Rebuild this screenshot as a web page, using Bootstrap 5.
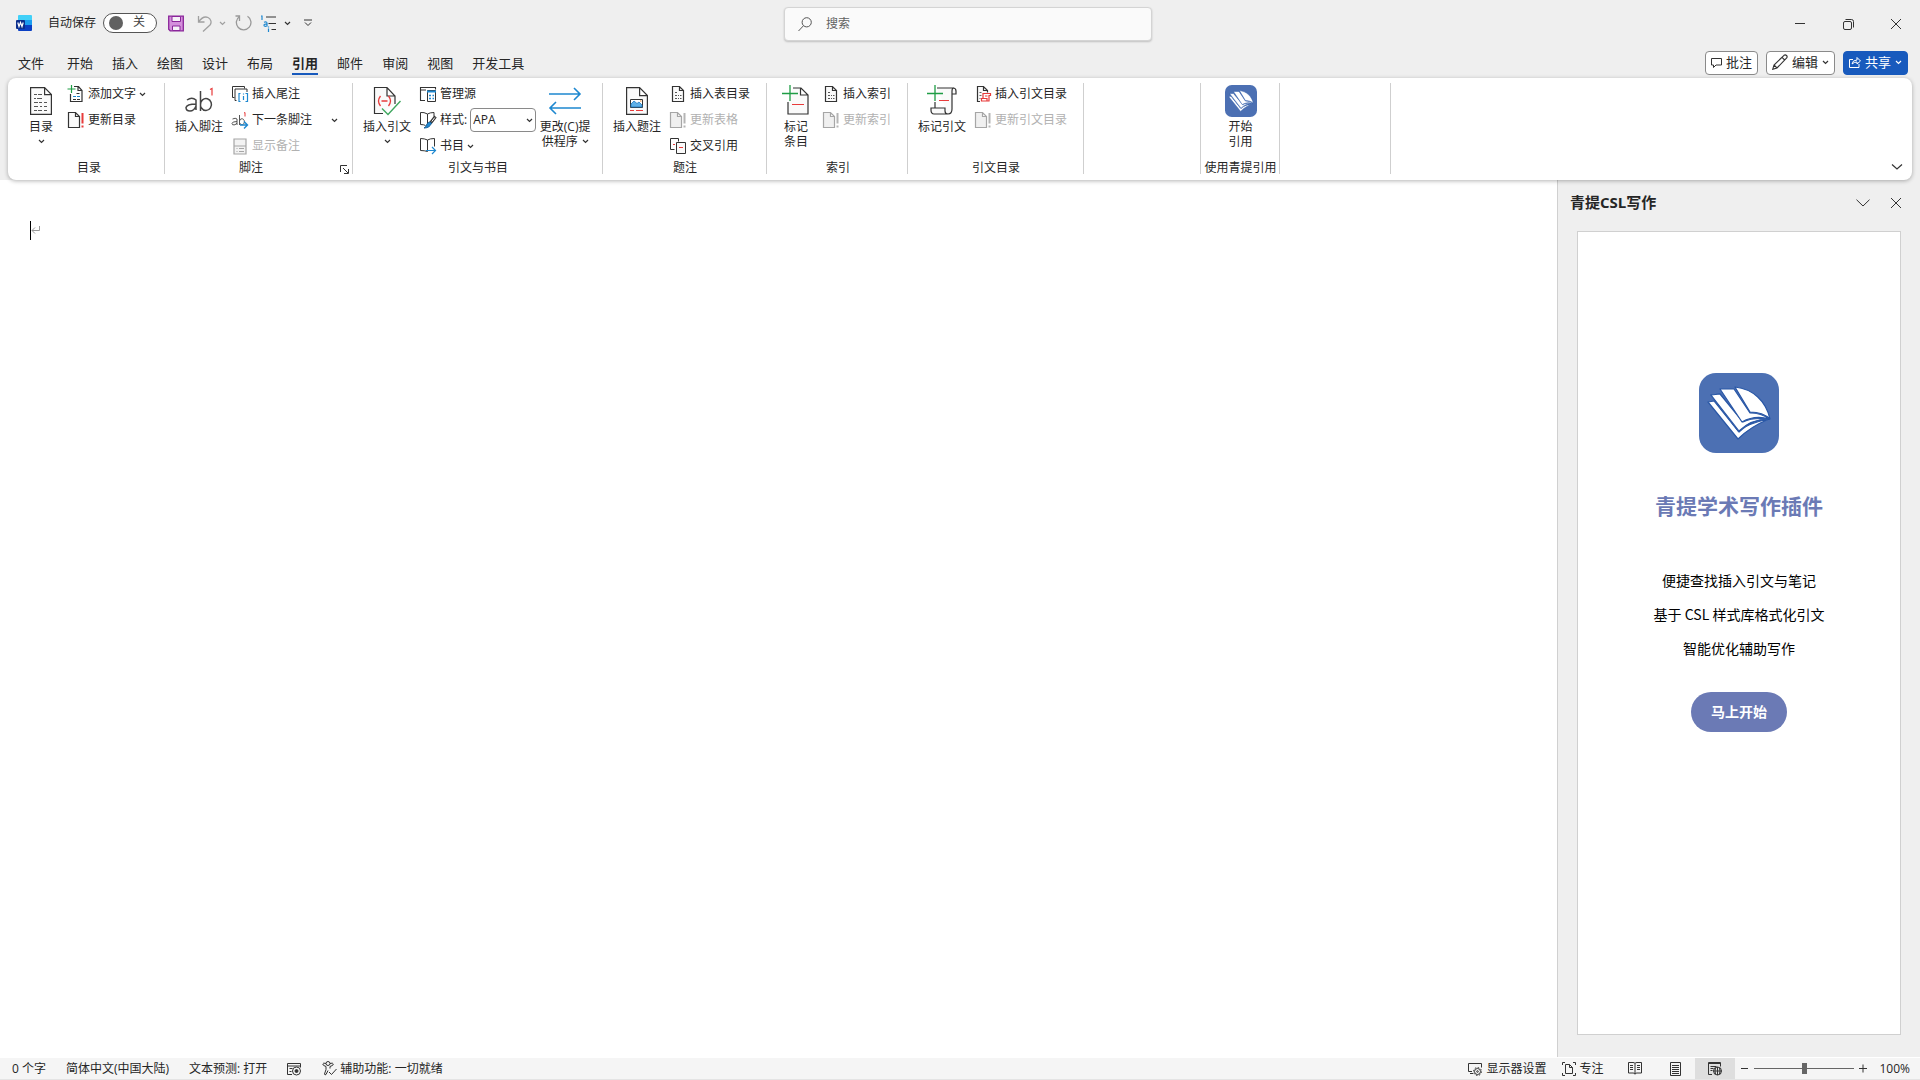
<!DOCTYPE html>
<html lang="zh-CN">
<head>
<meta charset="utf-8">
<meta name="viewport" content="width=device-width, initial-scale=1">
<title>Word - 引用</title>
<link href="https://cdn.jsdelivr.net/npm/bootstrap@5.3.0/dist/css/bootstrap.min.css" rel="stylesheet">
<style>
body{font-family:"Open Sans","Noto Sans CJK SC",sans-serif;font-size:12px;line-height:16px;color:#262626;background:#fff;height:100vh;overflow:hidden}
button,input,select{font-family:inherit;font-size:inherit;line-height:inherit;color:inherit}
button{border:0;background:none;padding:0;white-space:nowrap}
svg{display:block;flex:none;fill:none;stroke:#333}
a{color:inherit;text-decoration:none}
.topzone{background:#efefef}
.titlebar{height:48px;padding-left:16px}
.side{flex:1 1 0}
.quick{padding-bottom:2px}
.quick .spaced{margin-left:13px}
.toggle{position:relative;width:54px;height:20px;margin-left:7px;margin-right:11px}
.toggle input{appearance:none;display:block;width:54px;height:20px;margin:0;border:1px solid #555;border-radius:10px;background:#fff}
.toggle input::before{content:"";display:block;width:14px;height:14px;margin:2px 5px;border-radius:50%;background:#616161}
.toggle span{position:absolute;left:30px;top:1px;color:#444}
.searchbox{width:368px;height:34px;background:#fafafa;border:1px solid #d4d4d4;border-radius:4px;box-shadow:0 1px 2px #0003;padding:0 13px;gap:14px}
.searchbox input{border:0;background:none;outline:0;min-width:0;padding:0}
.searchbox input::placeholder{color:#616161;opacity:1}
.winbtn{width:48px;height:48px}
.tabrow{height:30px;padding-left:18px;padding-right:12px}
.tabs{gap:19px;font-size:13px}
.tabs a{display:block;height:26px;line-height:28px;margin-top:1px;border-bottom:2px solid transparent}
.tabs a.current{font-weight:700;border-color:#185abd}
.tabs .file{margin-right:4px}
.pill{height:24px;border:1px solid #8a8a8a;border-radius:4px;background:#fff;font-size:13px;padding:0 5px 2px;gap:4px}
.pill.share{background:#185abd;border-color:#185abd;color:#fff}
.pill.share svg{stroke:#fff}
.ribbon{position:relative;height:102px;margin:0 8px;background:#fff;border-radius:8px;box-shadow:0 1px 4px #0000004d;z-index:2}
.group{position:relative;padding:3px 0 4px 10px;display:flex;flex-direction:column}
.group::after{content:"";position:absolute;right:0;top:5px;bottom:6px;width:1px;background:#cfcfcf}
.tools{height:79px}
.caption{text-align:center;margin-left:-10px}
.g-toc{width:157px;padding-left:15px}
.g-foot{width:188px}
.g-foot .caption{padding-right:16px}
.g-cite{width:250px}
.g-cap{width:164px}
.g-index{width:141px;padding-left:11px}
.g-auth{width:176px}
.g-blank{width:117px}
.g-qt{width:79px;padding-left:0}
.g-qt .caption{margin-left:0}
.g-last{width:111px}
.big{width:48px;height:78px;display:flex;flex-direction:column;align-items:center;line-height:15px;padding-top:4px}
.big .ic{height:32px;margin-bottom:2px;display:flex;align-items:center}
.big.narrow{width:36px}
.big.wide{width:52px;margin-left:3px}
.big .chev{margin-top:5px}
.smalls{margin-left:8px}
.cmd{height:26px;display:flex;align-items:center;gap:3px;white-space:nowrap}
.cmd .ic{width:18px;display:flex;justify-content:center;flex:none}
.cmd:disabled{color:#b1b1b1}
.cmd:disabled svg{stroke:#a6a6a6}
.pick{position:relative;width:66px;height:24px}
.pick select{appearance:none;width:66px;height:24px;border:1px solid #8a8a8a;border-radius:4px;background:#fff;padding:0 2px}
.pick svg{position:absolute;right:3px;top:10px;pointer-events:none}
.launcher{position:absolute;right:4px;bottom:6px}
.collapse-btn{position:absolute;right:9px;bottom:7px}
.page{padding:41px 30px}
.caret{width:1px;height:19px;background:#000}
.pane{width:363px;background:#efefef;border-left:1px solid #d0d0d0;padding:0 19px 23px}
.pane-head{height:51px;padding-top:3px;margin-left:-7px;margin-right:-19px}
.pane-head h2{font-size:15px;line-height:20px;font-weight:700;margin:0 0 11px}
.pane-head button{width:33px;height:33px;display:flex;align-items:center;justify-content:center}
.frame{border:1px solid #d0d0d0;background:#fff;color:#000;padding-top:141px;font-family:"Noto Sans CJK SC",sans-serif}
.frame h1{font-size:21px;line-height:30px;font-weight:700;color:#6b7ab5;margin:37px 0 43px}
.frame p{font-size:14px;line-height:34px;margin:0}
.start{width:96px;height:40px;border-radius:20px;background:#6b7ab5;color:#fff;font-size:14px;font-weight:700;margin-top:27px;padding-bottom:2px}
.statusbar{height:22px;background:#f5f5f5;border-bottom:1px solid #e4e4e4;padding-left:12px;box-shadow:0 -1px #fff}
.statusbar button{height:21px;display:flex;align-items:center;gap:3px}
.facts{gap:20px}
.focus-mode{margin:0 12px 0 16px}
.statusbar .view{width:40px;justify-content:center}
.view.on{background:#dedede}
.zoom-out{padding-left:6px}
.zoom-level{padding:0 10px 0 11px}
.zoomer{appearance:none;width:100px;height:11px;margin:0 5px;background:linear-gradient(#666,#666) center/100% 1px no-repeat}
.zoomer::-webkit-slider-thumb{appearance:none;width:5px;height:11px;background:#666;border:0}
</style>
<script src="https://cdn.jsdelivr.net/npm/bootstrap@5.3.0/dist/js/bootstrap.bundle.min.js"></script>
</head>
<body class="d-flex flex-column">
<svg width="0" height="0" class="position-absolute" aria-hidden="true">
  <symbol id="chev" viewBox="0 0 7 5"><path d="M1 1l2.500 2.500L6 1" stroke-width="1.200"/></symbol>
  <symbol id="close" viewBox="0 0 12 12"><path d="M1 1l10 10M11 1L1 11"/></symbol>
  <symbol id="docbang" viewBox="0 0 18 18"><path d="M1.500 1.500h7l4 4v11h-11zM8.500 1.500v4h4" fill="var(--f,#fafafa)" stroke-width="1.200"/><path d="M15.500 2v10.500M15.500 14.500v2" stroke="var(--b,#e83b3b)" stroke-width="2"/></symbol>
  <symbol id="doclist" viewBox="0 0 18 18"><path d="M3.500 1.500h7l4 4v11h-11zM10.500 1.500v4h4" fill="#fafafa" stroke-width="1.200"/><path d="M6 7.500h2M6 10.500h2M9 10.500h1M11 10.500h1.500M6 13.500h2M9 13.500h1M11 13.500h1.500" stroke="#555"/></symbol>
  <symbol id="books" viewBox="0 0 80 80"><rect width="80" height="80" rx="17" fill="#4c70b3" stroke="none"/>
    <g fill="#fff" stroke="#2957a6" stroke-width="1.200" stroke-linejoin="round"><path d="M9 29l6-1 24 30c8-6 17-9 31-12C58 51 49 56 39 66z"/><path d="M12 22l9-1 20 35c7-6 18-9 29-10-12 1-20 4-30 13z"/><path d="M12 22l9-1 23 28c8-4 17-4 26-3-12 0-21 3-30 12z"/><path d="M21 16h14l16 24c8 0 14 2 19 6-10-3-18-2-27 3z"/><path d="M36 14c18 2 31 14 35 32-5-5-12-7-20-7z"/></g></symbol>
</svg>

<header class="topzone">
  <div class="titlebar d-flex align-items-center">
    <div class="side quick d-flex align-items-center">
      <svg width="16" height="16" viewBox="0 0 16 16"><g stroke="none"><rect x="2" width="14" height="6" rx="1" fill="#41d0f8"/><rect x="2" y="5" width="14" height="6" fill="#1b9df0"/><path d="M2 10h14v5q0 1-1 1H3q-1 0-1-1z" fill="#0a3fc4"/><rect y="5" width="9" height="9" rx="1" fill="#0b2e8c"/></g><path d="M1.800 7.500l1.200 4 1.500-4 1.500 4 1.200-4" stroke="#fff" stroke-width="1.200"/></svg>
      <label for="autosave" class="ms-3">自动保存</label>
      <div class="toggle"><input type="checkbox" id="autosave" role="switch"><span>关</span></div>
      <button aria-label="保存"><svg width="16" height="17" viewBox="0 0 16 17"><path d="M.700 1.200h12.600l2 0v14.600H2.200L.700 14.300z" fill="#d48fdc" stroke="#8a259a" stroke-width="1.300"/><path d="M4 1.500h8.500v5H4zM4.500 11h7.500v4.500H4.500z" fill="#f6f0f8" stroke="#8a259a"/></svg></button>
      <button aria-label="撤消" class="spaced d-flex align-items-center gap-1"><svg width="16" height="17" viewBox="0 0 16 17"><path d="M1.500 1v6h6M1.500 7C5 2 8 1.200 11 2.500c3 1.300 4 5 2 7.500L6 16.500" stroke="#a0a0a0" stroke-width="1.300"/></svg><svg width="9" height="5" viewBox="0 0 9 5"><path d="M3 1l2.500 2.500L8 1" stroke="#a0a0a0" stroke-width="1.200"/></svg></button>
      <button aria-label="重做" class="ms-2"><svg width="18" height="17" viewBox="0 0 18 17"><path d="M1.500 1h4v5M5.500 1.500a7.300 7.300 0 1 0 8-.2" stroke="#999" stroke-width="1.300"/></svg></button>
      <button aria-label="多级列表" class="d-flex align-items-center gap-2 ms-2"><svg width="16" height="17" viewBox="0 0 16 17"><path d="M6 2h10M8.500 8.500H16M11.500 14.500H16"/><path d="M1 1h1v4M4 7.200q3-1 3 1V11q-3 .8-3-.7t3-1M8.500 11.500v1M8.500 13.500V17" stroke="#1e88d0" stroke-width="1.200"/></svg><svg width="7" height="5"><use href="#chev"/></svg></button>
      <button aria-label="自定义快速访问工具栏" class="spaced"><svg width="8" height="8" viewBox="0 0 8 8"><path d="M0 1h8M1 3.500l3 3 3-3"/></svg></button>
    </div>
    <div class="searchbox d-flex align-items-center">
      <svg width="14" height="15" viewBox="0 0 14 15"><g stroke="#555"><circle cx="8.700" cy="5.300" r="4.600"/><path d="M5.500 8.700L.500 14"/></g></svg>
      <input type="text" placeholder="搜索" aria-label="搜索">
    </div>
    <div class="side d-flex justify-content-end">
      <button class="winbtn d-flex align-items-center justify-content-center" aria-label="最小化"><svg width="10" height="10"><path d="M0 4.500h10"/></svg></button>
      <button class="winbtn d-flex align-items-center justify-content-center" aria-label="还原"><svg width="11" height="11" viewBox="0 0 11 11"><rect x=".5" y="2.500" width="8" height="8" rx="1.500"/><path d="M2.500.500h6q2 0 2 2v6"/></svg></button>
      <button class="winbtn d-flex align-items-center justify-content-center" aria-label="关闭"><svg width="12" height="12"><use href="#close"/></svg></button>
    </div>
  </div>

  <div class="tabrow d-flex align-items-center justify-content-between">
    <nav class="tabs d-flex align-self-start" aria-label="功能区选项卡">
      <a href="#" class="file">文件</a><a href="#">开始</a><a href="#">插入</a><a href="#">绘图</a><a href="#">设计</a><a href="#">布局</a><a href="#" class="current">引用</a><a href="#">邮件</a><a href="#">审阅</a><a href="#">视图</a><a href="#">开发工具</a>
    </nav>
    <div class="d-flex gap-2">
      <button class="pill d-flex align-items-center"><svg width="11" height="11" viewBox="0 0 11 11"><path d="M.500 1.500h10v6.500H5L2.500 10.500V8H.500z"/></svg>批注</button>
      <button class="pill d-flex align-items-center"><svg width="16" height="16" viewBox="0 0 16 16"><path d="M.700 15.300L2 11 12 1.300q1.300-1 2.500.2t.2 2.500L5 14zM10 3.300L12.700 6M2 11l3 3" stroke-width="1.100"/></svg>编辑<svg width="7" height="5"><use href="#chev"/></svg></button>
      <button class="pill share d-flex align-items-center"><svg width="12" height="12" viewBox="0 0 12 12"><path d="M4 3.500H.500v8h9.500V8M3 8q.5-4 5-4V1.500L11.500 5 8 8V6Q5 6 3 8z"/></svg>共享<svg width="7" height="5"><use href="#chev"/></svg></button>
    </div>
  </div>

  <div class="ribbon d-flex">
    <section class="group g-toc">
      <div class="tools d-flex">
        <button class="big narrow"><span class="ic"><svg width="22" height="28" viewBox="0 0 22 28"><path d="M.600.600h14l6.800 7v19.800H.600zM14.600.600v7h6.800" fill="#fafafa" stroke-width="1.200"/><path d="M4 7.500h3M8 7.500h4M4 11.500h2M7 11.500h5M4 15.500h4M9 15.500h3M14 15.500h3M4 19.500h4M10 19.500h2M14 19.500h3M4 23.500h3M8 23.500h4M14 23.500h3" stroke="#555"/></svg></span>目录<svg class="chev" width="7" height="5"><use href="#chev"/></svg></button>
        <div class="smalls">
          <button class="cmd"><span class="ic"><svg width="18" height="18" viewBox="0 0 18 18"><path d="M7 1.500h4.500l3.500 4v11H3.500V9M11 1.500v4h4" stroke-width="1.200"/><path d="M4.500 0v8M.500 4h8" stroke="#1f9d45" stroke-width="1.200"/><path d="M9.500 8.500h3M6 14.500h3M10 14.500h3"/><path d="M6 11.500h3M10 11.500h3" stroke="#1e88d0"/></svg></span>添加文字<svg width="7" height="5"><use href="#chev"/></svg></button>
          <button class="cmd"><span class="ic"><svg width="18" height="18"><use href="#docbang"/></svg></span>更新目录</button>
        </div>
      </div>
      <div class="caption">目录</div>
    </section>

    <section class="group g-foot">
      <div class="tools d-flex">
        <button class="big"><span class="ic"><svg width="32" height="30" viewBox="0 0 32 30"><path d="M4 14q5-3.500 9 0v10M13 18q-9 0-10 3.500Q3 25 7 25q4 0 6-5M17.500 5v20M17.500 19a5.500 6 0 1 1 1 3q-1-1-1-3" stroke="#444" stroke-width="1.500"/><path d="M27 3.500l2-1v7" stroke="#e83b3b" stroke-width="1.200"/></svg></span>插入脚注</button>
        <div class="smalls">
          <button class="cmd"><span class="ic"><svg width="18" height="18" viewBox="0 0 18 18"><path d="M3.500 12.500H1.500v-11h12v2M5.500 15.500H4V4h12v3" /><path d="M9.500 8.500H8v8h1.500M14.500 8.500H16.500v8H14.500M12.500 8.500v1M12.500 11v4" stroke="#1e88d0" stroke-width="1.200"/></svg></span>插入尾注</button>
          <button class="cmd"><span class="ic"><svg width="18" height="18" viewBox="0 0 18 18"><path d="M1.500 8q3-1.500 4.500 0v6M6 10.500q-5 0-5 2t3 1.300L6 12M8.500 4v10M8.500 10a2.500 3 0 1 1 0 1.500" stroke="#555"/><path d="M13 2l1-.5v4" stroke="#e83b3b"/><path d="M9 14h7M13 10.500l3.500 3.500-3.500 3.500" stroke="#1e88d0" stroke-width="1.400"/></svg></span>下一条脚注<svg width="7" height="5" class="ms-3"><use href="#chev"/></svg></button>
          <button class="cmd" disabled><span class="ic"><svg width="14" height="17" viewBox="0 0 14 17"><path d="M1 1h12v15H1zM1 8h12" fill="#f3f3f3" stroke-width="1.200"/><path d="M3.500 10.500h1M6 10.500h5M3.500 13.500h1M6 13.500h5"/></svg></span>显示备注</button>
        </div>
      </div>
      <div class="caption">脚注</div>
      <button class="launcher" aria-label="脚注和尾注"><svg width="9" height="9" viewBox="0 0 9 9"><path d="M7 .500H.500V7M3 3l5 5M8.500 4v4.500H4"/></svg></button>
    </section>

    <section class="group g-cite">
      <div class="tools d-flex">
        <button class="big"><span class="ic"><svg width="28" height="30" viewBox="0 0 28 30"><path d="M10 27.500H1.500v-26h12.500l8 8.500v8M14 1.500v8.500h8" fill="#fafafa" stroke-width="1.200"/><path d="M7.500 10q-4 5 0 10M15.500 10q4 5 0 10M8.500 15h6" stroke="#e83b3b" stroke-width="1.300"/><path d="M9 22.500l6 6 12.500-13.500" stroke="#3fa75f" stroke-width="1.400"/></svg></span>插入引文<svg class="chev" width="7" height="5"><use href="#chev"/></svg></button>
        <div class="smalls">
          <button class="cmd"><span class="ic"><svg width="18" height="18" viewBox="0 0 18 18"><path d="M6 15.500H1.500V2.500h15v2M1.500 5H7" stroke-width="1.100"/><path d="M8.500 5.500h8v11h-8z" fill="#fff"/><path d="M8 6.500h9" stroke="#1e88d0" stroke-width="2"/><path d="M10 10.500h2M10 13.500h2M13.500 10.500H15M13.500 13.500H15" stroke="#1e88d0" stroke-width="1.500"/></svg></span>管理源</button>
          <div class="cmd"><span class="ic"><svg width="18" height="18" viewBox="0 0 18 18"><path d="M8.500 3v11M8.500 3Q5 1 1.500 1.500v12q3.500 0 5 1M8.500 3Q11 1.500 15 1.500v4" /><path d="M16.500 5.500l-5 6.500" stroke="#333" stroke-width="3"/><path d="M15.800 6.500l-3 4" stroke="#fff"/><path d="M12.500 12Q11 17 5 17q2-1 3-4 1-2 3-2z" fill="#1e88d0" stroke="#1a5f98"/></svg></span><label for="citestyle">样式:</label>
            <div class="pick"><select id="citestyle"><option>APA</option></select><svg width="7" height="5"><use href="#chev"/></svg></div></div>
          <button class="cmd"><span class="ic"><svg width="18" height="18" viewBox="0 0 18 18"><path d="M8.500 3v11.500M8.500 3Q5.500 1.500 1.500 1.500v12q4 0 7 1M8.500 3Q11 1.500 15.500 1.500v8" /><path d="M7 13.500h9M13 10l3.500 3.500L13 17" stroke="#1e88d0" stroke-width="1.200"/></svg></span>书目<svg width="7" height="5"><use href="#chev"/></svg></button>
        </div>
        <button class="big wide"><span class="ic"><svg width="34" height="28" viewBox="0 0 34 28"><path d="M1 7h31M26 1l6 6-6 6M33 21H2M8 15l-6 6 6 6" stroke="#1e88d0" stroke-width="1.600"/></svg></span>更改(C)提<span class="d-flex align-items-center gap-1">供程序<svg width="7" height="5"><use href="#chev"/></svg></span></button>
      </div>
      <div class="caption">引文与书目</div>
    </section>

    <section class="group g-cap">
      <div class="tools d-flex">
        <button class="big"><span class="ic"><svg width="22" height="28" viewBox="0 0 22 28"><path d="M.600.600h13l7.800 8v18.800H.600zM13.600.600v8h7.800" fill="#fafafa" stroke-width="1.200"/><path d="M4.500 12.500h12v8h-12z" fill="#fff"/><path d="M5 17l3-3 3 2.500 2-1.500 3 3v2H5z" fill="#5db0e8" stroke="#1e78c0" stroke-width=".8"/><path d="M14 14h1.500" stroke="#e8882b"/><path d="M4 23.500h4M10 23.500h7" stroke="#e83b3b"/></svg></span>插入题注</button>
        <div class="smalls">
          <button class="cmd"><span class="ic"><svg width="18" height="18"><use href="#doclist"/></svg></span>插入表目录</button>
          <button class="cmd" disabled><span class="ic"><svg width="18" height="18" style="--f:#f0f0f0;--b:#b5b5b5"><use href="#docbang"/></svg></span>更新表格</button>
          <button class="cmd"><span class="ic"><svg width="18" height="18" viewBox="0 0 18 18"><path d="M5.500 12.500h-4v-11h8v3" /><path d="M7.500 5.500h9v11h-9z" fill="#fafafa"/><path d="M4 7.500h2M10 10.500h4" stroke="#e83b3b" stroke-width="1.200"/></svg></span>交叉引用</button>
        </div>
      </div>
      <div class="caption">题注</div>
    </section>

    <section class="group g-index">
      <div class="tools d-flex">
        <button class="big narrow"><span class="ic"><svg width="28" height="32" viewBox="0 0 28 32"><path d="M11 3h8l7 7v19H6V17M18.500 3v7H26" fill="#fafafa" stroke-width="1.200"/><path d="M8 0v16M0 8.500h16" stroke="#1f9d45" stroke-width="1.300"/><path d="M10 19.500h12" stroke="#e83b3b"/></svg></span>标记<span>条目</span></button>
        <div class="smalls">
          <button class="cmd"><span class="ic"><svg width="18" height="18"><use href="#doclist"/></svg></span>插入索引</button>
          <button class="cmd" disabled><span class="ic"><svg width="18" height="18" style="--f:#f0f0f0;--b:#b5b5b5"><use href="#docbang"/></svg></span>更新索引</button>
        </div>
      </div>
      <div class="caption">索引</div>
    </section>

    <section class="group g-auth">
      <div class="tools d-flex">
        <button class="big"><span class="ic"><svg width="30" height="32" viewBox="0 0 30 32"><path d="M10 3h16q3 0 3 3v3h-4V24q0 5-4 5H7q-3 0-3-4v-2h14v3q0 3 3 3M25 9V6q0-3 2-3M8 17v6" fill="#fafafa" stroke-width="1.200"/><path d="M8 0v16M0 8.500h16" stroke="#1f9d45" stroke-width="1.300"/><path d="M12 15.500h10" stroke="#e83b3b"/></svg></span>标记引文</button>
        <div class="smalls">
          <button class="cmd"><span class="ic"><svg width="18" height="18" viewBox="0 0 18 18"><path d="M6 16.500H3.500v-15h6l4 4v2M9.500 1.500v4h4" fill="#fafafa" stroke-width="1.200"/><path d="M5.500 7.500h2M5.500 10.500h2M5.500 13.500h1" stroke="#666"/><path d="M9 8.500h7.500v2H15v5.500H7.500v-2.500H9zM11 11h2.500M9 13.500h4V16" stroke="#e83b3b" stroke-width="1.200"/></svg></span>插入引文目录</button>
          <button class="cmd" disabled><span class="ic"><svg width="18" height="18" style="--f:#f0f0f0;--b:#b5b5b5"><use href="#docbang"/></svg></span>更新引文目录</button>
        </div>
      </div>
      <div class="caption">引文目录</div>
    </section>

    <section class="group g-blank"></section>

    <section class="group g-qt">
      <div class="tools d-flex justify-content-center">
        <button class="big"><span class="ic"><svg width="32" height="32"><use href="#books"/></svg></span>开始<span>引用</span></button>
      </div>
      <div class="caption">使用青提引用</div>
    </section>
    <section class="group g-last"></section>
    <button class="collapse-btn" aria-label="折叠功能区"><svg width="12" height="12" viewBox="0 0 12 12"><path d="M1 3.500L6 8l5-4.500" stroke-width="1.200"/></svg></button>
  </div>
</header>

<main class="d-flex flex-grow-1">
  <div class="page flex-grow-1 d-flex align-items-start">
    <div class="caret"></div>
    <svg class="mt-1" width="9" height="9" viewBox="0 0 9 9"><path d="M8.500 1v4.500H1M4 2.500l-3 3 3 3" stroke="#999"/></svg>
  </div>
  <aside class="pane d-flex flex-column">
    <div class="pane-head d-flex align-items-center">
      <h2 class="flex-grow-1">青提CSL写作</h2>
      <div class="d-flex pe-2 pb-2"><button aria-label="任务窗格选项"><svg width="14" height="8" viewBox="0 0 14 8"><path d="M.500.700L7 7l6.500-6.300"/></svg></button><button aria-label="关闭窗格"><svg width="12" height="12"><use href="#close"/></svg></button></div>
    </div>
    <div class="frame flex-grow-1 text-center">
      <svg class="mx-auto" width="80" height="80"><use href="#books"/></svg>
      <h1>青提学术写作插件</h1>
      <p>便捷查找插入引文与笔记</p>
      <p>基于 CSL 样式库格式化引文</p>
      <p>智能优化辅助写作</p>
      <button class="start">马上开始</button>
    </div>
  </aside>
</main>

<footer class="statusbar d-flex justify-content-between">
  <div class="facts d-flex">
    <button>0 个字</button>
    <button>简体中文(中国大陆)</button>
    <button>文本预测: 打开</button>
    <button aria-label="宏录制" class="me-n1"><svg width="15" height="14" viewBox="0 0 15 14"><path d="M5 12.500H.500v-11h13v4M.500 4h13M2.500 6.500h3M2.500 9.500h2"/><circle cx="9.500" cy="9" r="4"/><circle cx="9.500" cy="9" r="1.500" fill="#333"/></svg></button>
    <button><svg width="15" height="15" viewBox="0 0 15 15"><circle cx="6" cy="2.500" r="2"/><path d="M4 2.500Q1 1.500.800 3T4 5.500v3L2.500 13q.3 1.500 1.500.5l2-4M8 2.500q3-1 3.300.5T8 5.500v2M7 11l2.500 2.500L14.500 8"/></svg>辅助功能: 一切就绪</button>
  </div>
  <div class="d-flex align-items-center">
    <button><svg width="15" height="14" viewBox="0 0 15 14"><path d="M4 9.500H.500v-8h13v4M2 11.500h3"/><circle cx="9.500" cy="9.500" r="3"/><circle cx="9.500" cy="9.500" r="4" stroke-dasharray="1.500 1.600"/><circle cx="9.500" cy="9.500" r=".8"/></svg>显示器设置</button>
    <button class="focus-mode"><svg width="14" height="14" viewBox="0 0 14 14"><path d="M3 .500H.500V3M11 .500h2.500V3M3 13.500H.500V11M11 13.500h2.500V11M3.500 2.500h4l3 3v6h-7zM7.500 2.500v3h3"/></svg>专注</button>
    <button class="view" aria-label="阅读视图"><svg width="14" height="13" viewBox="0 0 14 13"><path d="M7 1.500v11M.500.500H5q2 0 2 1 0-1 2-1h4.500v10.500H9q-2 0-2 1 0-1-2-1H.500zM2 3.500h3M2 5.500h3M2 7.500h3M9 3.500h3M9 5.500h3M9 7.500h3"/></svg></button>
    <button class="view" aria-label="页面视图"><svg width="11" height="14" viewBox="0 0 11 14"><path d="M.500.500h10v13H.500zM2 3.500h7M2 5.500h7M2 7.500h7M2 9.500h7M2 11.500h7"/></svg></button>
    <button class="view on" aria-label="Web 版式视图"><svg width="15" height="14" viewBox="0 0 15 14"><path d="M4 12.500H.500v-12h12v4M0 1.500h13M2.500 4.500h6M2.500 6.500h3M2.500 8.500h2"/><circle cx="9.500" cy="9" r="4"/><path d="M5.500 9h8M9.500 5v8M7.500 6q-1 3 0 6M11.500 6q1 3 0 6"/></svg></button>
    <button aria-label="缩小" class="zoom-out"><svg width="8" height="9"><path d="M0 4.500h7"/></svg></button>
    <input type="range" class="zoomer" aria-label="缩放" min="0" max="100" value="50">
    <button aria-label="放大"><svg width="9" height="9"><path d="M0 4.500h8M4 .500v8"/></svg></button>
    <button class="zoom-level">100%</button>
  </div>
</footer>
</body>
</html>
